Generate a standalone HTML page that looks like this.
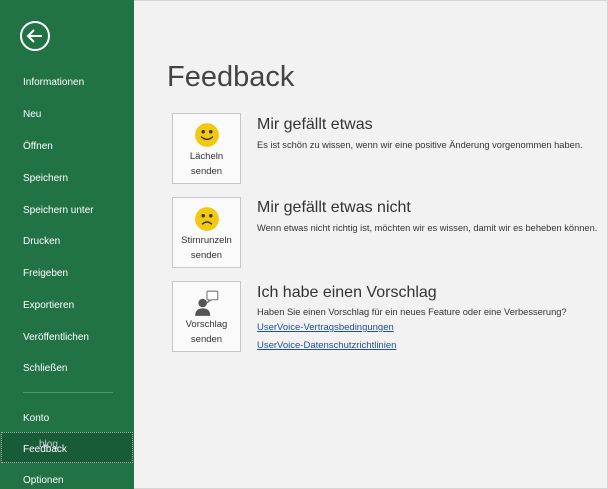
<!DOCTYPE html>
<html><head><style>
body{margin:0;width:608px;height:489px;overflow:hidden;font-family:"Liberation Sans",sans-serif;background:#f2f2f2;position:relative}
.side{position:absolute;left:0;top:0;width:134px;height:489px;background:#217346;color:#fff}
.side div.i{position:absolute;left:23px;font-size:10px;line-height:12px}
.sel{position:absolute;left:1px;top:432px;width:132px;height:31px;background:#185c37;border:1px dotted #aaa;box-sizing:border-box}
.sep{position:absolute;left:23px;top:392px;width:90px;height:1px;background:#4d9670}
.main{position:absolute;left:134px;top:0;right:0;bottom:0;border:1px solid #d6d6d6;border-left:none}
h1{position:absolute;left:33px;top:60px;margin:0;font-weight:normal;font-size:29px;color:#444}
.btn{position:absolute;left:38px;width:69px;height:71px;background:#fafafa;border:1px solid #c6c6c6;box-sizing:border-box;text-align:center;font-size:9.5px;color:#333;line-height:15px}
.btn svg{display:block;margin:8px auto 1px}
.t{position:absolute;left:123px;font-size:16px;color:#333}
.d{position:absolute;left:123px;font-size:9.3px;color:#333}
.l{position:absolute;left:123px;font-size:9.5px;color:#1e4e9c;text-decoration:underline}
</style></head><body>
<div class="side">
<svg style="position:absolute;left:19px;top:20px" width="32" height="32" viewBox="0 0 32 32"><circle cx="16" cy="16" r="14" fill="none" stroke="#fff" stroke-width="2"/><path d="M23 16H9M15 10l-6 6 6 6" fill="none" stroke="#fff" stroke-width="2"/></svg>
<div class="i" style="top:77px">Informationen</div>
<div class="i" style="top:109px">Neu</div>
<div class="i" style="top:141px">Öffnen</div>
<div class="i" style="top:173px">Speichern</div>
<div class="i" style="top:205px">Speichern unter</div>
<div class="i" style="top:236px">Drucken</div>
<div class="i" style="top:268px">Freigeben</div>
<div class="i" style="top:300px">Exportieren</div>
<div class="i" style="top:332px">Veröffentlichen</div>
<div class="i" style="top:363px">Schließen</div>
<div class="sep"></div>
<div class="i" style="top:413px">Konto</div>
<div class="sel"></div>
<div class="i" style="top:444px">Feedback</div>
<div class="i" style="top:439px;left:39px;opacity:.7">blog</div>
<div class="i" style="top:475px">Optionen</div>
</div>
<div class="main">
<h1>Feedback</h1>
<div class="btn" style="top:112px"><svg width="26" height="26" viewBox="0 0 24 24"><circle cx="12" cy="12" r="11" fill="#f2c811"/><circle cx="8.5" cy="9" r="1.6" fill="#333"/><circle cx="15.5" cy="9" r="1.6" fill="#333"/><path d="M6.5 13.5q5.5 5 11 0" fill="none" stroke="#333" stroke-width="1.3"/></svg>Lächeln<br>senden</div>
<div class="btn" style="top:196px"><svg width="26" height="26" viewBox="0 0 24 24"><circle cx="12" cy="12" r="11" fill="#f2c811"/><circle cx="8.5" cy="9" r="1.6" fill="#333"/><circle cx="15.5" cy="9" r="1.6" fill="#333"/><path d="M7.5 17q4.5-4.5 9 0" fill="none" stroke="#333" stroke-width="1.3"/></svg>Stirnrunzeln<br>senden</div>
<div class="btn" style="top:280px"><svg width="28" height="26" viewBox="0 0 26 24"><rect x="13" y="1" width="10" height="8" rx="1" fill="#fff" stroke="#777"/><path d="M15 9l-2 3 4-3" fill="#fff" stroke="#777"/><circle cx="9" cy="12" r="4" fill="#555"/><path d="M2 24q0-7 7-7t7 7z" fill="#555"/></svg>Vorschlag<br>senden</div>
<div class="t" style="top:115px">Mir gefällt etwas</div>
<div class="d" style="top:139px">Es ist schön zu wissen, wenn wir eine positive Änderung vorgenommen haben.</div>
<div class="t" style="top:198px">Mir gefällt etwas nicht</div>
<div class="d" style="top:222px">Wenn etwas nicht richtig ist, möchten wir es wissen, damit wir es beheben können.</div>
<div class="t" style="top:283px">Ich habe einen Vorschlag</div>
<div class="d" style="top:306px">Haben Sie einen Vorschlag für ein neues Feature oder eine Verbesserung?</div>
<div class="l" style="top:321px">UserVoice-Vertragsbedingungen</div>
<div class="l" style="top:339px">UserVoice-Datenschutzrichtlinien</div>
</div>
</body></html>
